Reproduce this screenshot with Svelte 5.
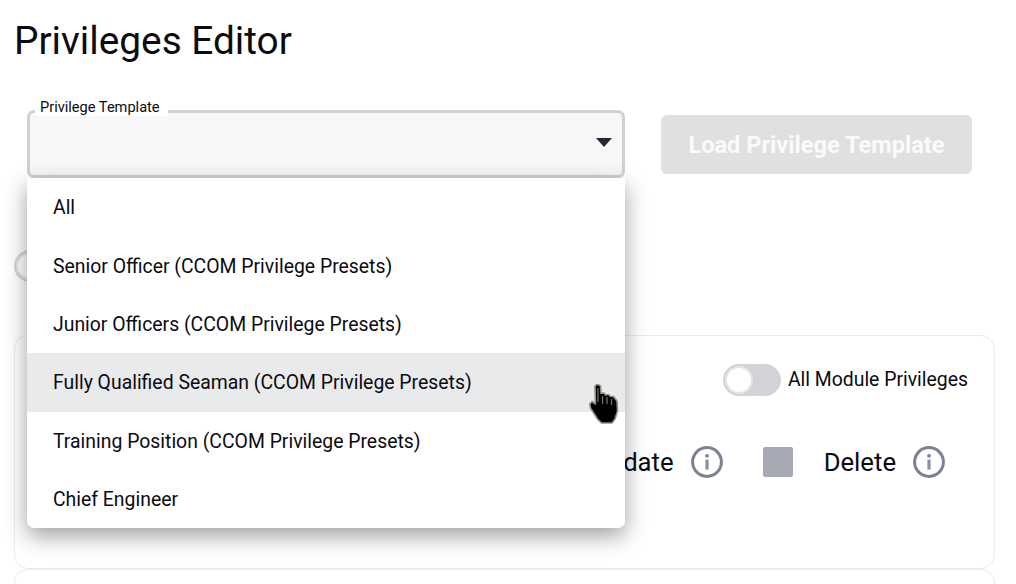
<script lang="ts">
  // Opciones del desplegable de plantillas
  const templates = [
    "All",
    "Senior Officer (CCOM Privilege Presets)",
    "Junior Officers (CCOM Privilege Presets)",
    "Fully Qualified Seaman (CCOM Privilege Presets)",
    "Training Position (CCOM Privilege Presets)",
    "Chief Engineer",
  ];
  const hovered = 3;
  const actions = ["Update", "Delete"];
</script>

<div class="page">
  <h1>Privileges Editor</h1>

  <div class="template-row">
    <div class="select">
      <span class="select-label">Privilege Template</span>
      <div class="select-box">
        <span class="arrow"></span>
      </div>
      <ul class="menu">
        {#each templates as name, i}
          <li class:hover={i === hovered}>{name}</li>
        {/each}
      </ul>
    </div>
    <button class="load" disabled>Load Privilege Template</button>
  </div>

  <div class="all-row">
    <span class="toggle"><span class="knob"></span></span>
  </div>

  <section class="card">
    <div class="card-head">
      <span class="toggle"><span class="knob"></span></span>
      <span class="toggle-text">All Module Privileges</span>
    </div>
    <div class="actions">
      {#each actions as action}
        <div class="action">
          <span class="check"></span>
          <span class="action-name">{action}</span>
          <svg class="info" viewBox="0 0 32 32" width="32" height="32">
            <circle cx="16" cy="16" r="14.4" fill="none" stroke="#7c8294" stroke-width="3" />
            <circle cx="16" cy="9.8" r="1.9" fill="#7c8294" />
            <rect x="14.4" y="13.6" width="3.2" height="10" fill="#8a90a3" />
          </svg>
        </div>
      {/each}
    </div>
  </section>
  <section class="card next"></section>

  <svg class="cursor" viewBox="0 0 30 42" width="30" height="42">
    <path
      d="M6 3Q8.5 .3 11.5 3L12 10.5 15 10 16.5 12 19.5 11.5 21.5 13.5 24.5 13.5 28 18 28.5 28 26 36 23 40 12.5 40 8.5 36 1.5 25 .8 21 3 18.5 6.5 21Z"
      fill="#000"
      stroke="#8d8d80"
      stroke-width="1.6"
      stroke-linejoin="round"
    />
    <path d="M9 5V19M13.5 13V21M18 14V21M22.5 16V22" fill="none" stroke="#77776c" stroke-width="1.2" />
  </svg>
</div>

<style>
  :global(body) {
    margin: 0;
    background: #fff;
    overflow: hidden;
  }

  .page {
    position: relative;
    box-sizing: border-box;
    height: 584px;
    overflow: hidden;
    padding: 17px 21px 0 14px;
    font-family: Roboto, "Liberation Sans", sans-serif;
    color: #0b0b10;
  }

  h1 {
    margin: 0;
    font-size: 38.8px;
    font-weight: 400;
    line-height: 48px;
  }

  .template-row {
    display: flex;
    align-items: center;
    gap: 36px;
    margin: 45px 0 0 13px;
  }

  .select {
    position: relative;
    width: 598px;
    z-index: 2;
  }

  .select-label {
    position: absolute;
    top: -12px;
    left: 8px;
    padding: 0 8px 0 5px;
    background: #fff;
    font-size: 14.6px;
    line-height: 18px;
  }

  .select-box {
    display: flex;
    align-items: center;
    justify-content: flex-end;
    box-sizing: border-box;
    height: 68px;
    padding-right: 10px;
    background: #f7f7f8;
    border: 3px solid #d0d1d8;
    border-radius: 7px;
  }

  .arrow {
    width: 0;
    height: 0;
    border-left: 8px solid transparent;
    border-right: 8px solid transparent;
    border-top: 9px solid #262733;
    margin-bottom: 4px;
  }

  .menu {
    position: absolute;
    top: 100%;
    left: 0;
    right: 0;
    margin: 0;
    padding: 0;
    list-style: none;
    background: #fff;
    border-radius: 0 0 7px 7px;
    box-shadow: 0 8px 22px rgba(0, 0, 0, 0.38);
  }

  .menu li {
    display: flex;
    align-items: center;
    box-sizing: border-box;
    height: 58.4px;
    padding: 1px 0 0 26px;
    font-size: 19.4px;
  }

  .menu li.hover {
    background: #e9eaec;
  }

  .load {
    width: 311px;
    height: 59px;
    padding-top: 2px;
    border: 0;
    border-radius: 6px;
    background: #e0e0e0;
    color: #fafafa;
    font-family: inherit;
    font-size: 23.6px;
    font-weight: 700;
  }

  .all-row {
    display: flex;
    margin-top: 72px;
  }

  .toggle {
    display: inline-block;
    box-sizing: border-box;
    width: 58px;
    height: 32px;
    padding: 2px;
    border-radius: 16px;
    background: #d2d3d9;
  }

  .knob {
    display: block;
    box-sizing: border-box;
    width: 28px;
    height: 28px;
    border: 2px solid #e4e5e9;
    border-radius: 50%;
    background: #fff;
  }

  .card {
    box-sizing: border-box;
    height: 234px;
    margin-top: 53px;
    padding: 28px 26px 0;
    border: 1px solid #ececee;
    border-radius: 14px;
  }

  .card.next {
    margin-top: 0;
    height: 60px;
  }

  .card-head {
    display: flex;
    align-items: center;
    justify-content: flex-end;
    gap: 7px;
  }

  .toggle-text {
    font-size: 19.4px;
    margin-top: -2px;
  }

  .actions {
    display: flex;
    justify-content: flex-end;
    gap: 40px;
    margin: 50px 23px 0 0;
  }

  .action {
    display: flex;
    align-items: center;
  }

  .check {
    width: 30px;
    height: 30px;
    margin-right: 31px;
    border-radius: 2px;
    background: #a7aab5;
  }

  .action-name {
    margin-right: 17px;
    font-size: 25.7px;
  }

  .cursor {
    position: absolute;
    left: 589px;
    top: 383px;
    z-index: 3;
  }
</style>
